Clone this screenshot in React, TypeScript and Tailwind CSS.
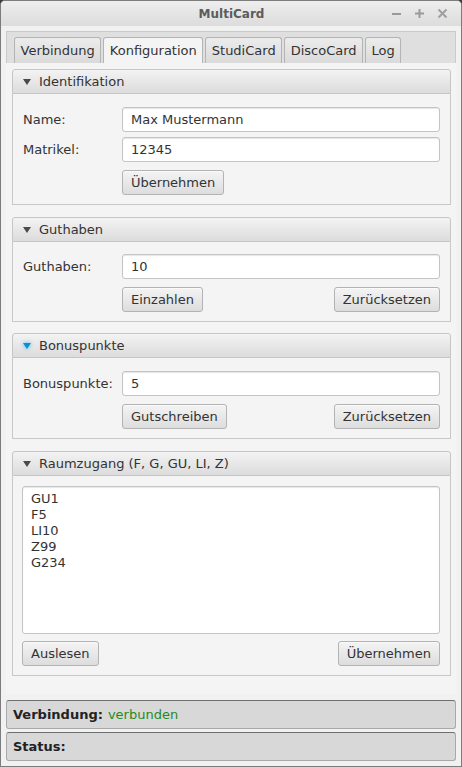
import React from "react";

function Arrow({ blue }: { blue?: boolean }) {
  return (
    <svg width="10" height="8" viewBox="0 0 10 8" className={blue ? "drop-shadow-[0_0_2px_#3fb4ef]" : ""}>
      <path d="M1 1 L9 1 L5 7 Z" fill={blue ? "#0b8fd3" : "#4a4a4a"} />
    </svg>
  );
}

function Btn({ children }: { children: React.ReactNode }) {
  return (
    <div className="h-[25px] px-[8px] flex items-center border border-[#b3b3b3] rounded-[3px] bg-gradient-to-b from-[#f4f4f4] to-[#dddddd] text-[13px] text-[#333] shadow-[inset_0_1px_0_#fafafa]">
      {children}
    </div>
  );
}

function Field({ value }: { value: string }) {
  return (
    <div className="flex-1 h-[25px] px-[8px] flex items-center border border-[#c4c4c4] rounded-[3px] bg-white text-[13px] text-[#333] shadow-[inset_0_1px_1px_#e6e6e6]">
      {value}
    </div>
  );
}

function Pane({ title, blue, children }: { title: string; blue?: boolean; children: React.ReactNode }) {
  return (
    <div className="flex flex-col">
      <div className="h-[25px] flex items-center gap-[7px] pl-[9px] border border-[#c6c6c6] rounded-t-[3px] bg-gradient-to-b from-[#f3f3f3] to-[#dcdcdc] text-[13px] text-[#333]">
        <Arrow blue={blue} />
        <span>{title}</span>
      </div>
      <div className="border-x border-b border-[#c8c8c8] bg-[#f4f4f4] pl-[9px] pr-[10px]">{children}</div>
    </div>
  );
}

function Label({ children }: { children: React.ReactNode }) {
  return <div className="w-[100px] pl-[1px] text-[13px] text-[#333]">{children}</div>;
}

export default function App() {
  const tabs = ["Verbindung", "Konfiguration", "StudiCard", "DiscoCard", "Log"];
  return (
    <div className="w-[462px] h-[767px] bg-[#3a3a3a] [font-family:'DejaVu_Sans',sans-serif]">
      <div className="w-full h-full flex flex-col border border-[#7c7c7c] rounded-t-[5px] bg-[#f1f1f1] overflow-hidden">
        {/* title bar */}
        <div className="h-[25px] shrink-0 grid grid-cols-[1fr_auto_1fr] items-center bg-gradient-to-b from-[#eeeeee] to-[#dcdcdc]">
          <div />
          <div className="text-[12px] font-bold text-[#5c5c5c] pl-[1px]">MultiCard</div>
          <div className="flex justify-end items-center gap-[12px] pr-[13px]">
            <svg width="11" height="11" viewBox="0 0 11 11">
              <path d="M1 6 H10" stroke="#9a9a9a" strokeWidth="2" />
            </svg>
            <svg width="11" height="11" viewBox="0 0 11 11">
              <path d="M1 5.5 H10 M5.5 1 V10" stroke="#9a9a9a" strokeWidth="2" />
            </svg>
            <svg width="11" height="11" viewBox="0 0 11 11">
              <path d="M1.5 1.5 L9.5 9.5 M9.5 1.5 L1.5 9.5" stroke="#a0a0a0" strokeWidth="2" />
            </svg>
          </div>
        </div>

        {/* tab pane */}
        <div className="mt-[5px] mx-[5px] flex-1 flex flex-col min-h-0">
          <div className="h-[32px] shrink-0 flex items-end gap-[2px] pl-[7px] bg-[#dfdfdf] border-x border-t border-[#cacaca]">
            {tabs.map((t) => (
              <div
                key={t}
                className={
                  "h-[26px] px-[5.5px] flex items-center border-x border-t border-[#b4b4b4] rounded-t-[3px] text-[13px] text-[#333] " +
                  (t === "Konfiguration" ? "bg-[#f4f4f4]" : "bg-gradient-to-b from-[#ececec] to-[#dadada]")
                }
              >
                {t}
              </div>
            ))}
          </div>
          <div className="flex-1 bg-[#f4f4f4] pl-[6px] pr-[5px] pt-[6px] flex flex-col">
            <Pane title="Identifikation">
              <div className="pt-[13px] pb-[9px] flex flex-col">
                <div className="flex items-center">
                  <Label>Name:</Label>
                  <Field value="Max Mustermann" />
                </div>
                <div className="flex items-center mt-[5px]">
                  <Label>Matrikel:</Label>
                  <Field value="12345" />
                </div>
                <div className="flex mt-[8px] pl-[100px]">
                  <Btn>Übernehmen</Btn>
                </div>
              </div>
            </Pane>
            <div className="mt-[12px]">
              <Pane title="Guthaben">
                <div className="pt-[12px] pb-[9px] flex flex-col">
                  <div className="flex items-center">
                    <Label>Guthaben:</Label>
                    <Field value="10" />
                  </div>
                  <div className="flex justify-between mt-[8px] pl-[100px]">
                    <Btn>Einzahlen</Btn>
                    <Btn>Zurücksetzen</Btn>
                  </div>
                </div>
              </Pane>
            </div>
            <div className="mt-[11px]">
              <Pane title="Bonuspunkte" blue>
                <div className="pt-[13px] pb-[9px] flex flex-col">
                  <div className="flex items-center">
                    <Label>Bonuspunkte:</Label>
                    <Field value="5" />
                  </div>
                  <div className="flex justify-between mt-[8px] pl-[100px]">
                    <Btn>Gutschreiben</Btn>
                    <Btn>Zurücksetzen</Btn>
                  </div>
                </div>
              </Pane>
            </div>
            <div className="mt-[12px]">
              <Pane title="Raumzugang (F, G, GU, LI, Z)">
                <div className="pt-[10px] pb-[9px] flex flex-col">
                  <div className="h-[148px] border border-[#c4c4c4] rounded-[3px] bg-white px-[8px] pt-[4px] text-[13px] leading-[16px] text-[#333] shadow-[inset_0_1px_1px_#e6e6e6]">
                    <div>GU1</div>
                    <div>F5</div>
                    <div>LI10</div>
                    <div>Z99</div>
                    <div>G234</div>
                  </div>
                  <div className="flex justify-between mt-[7px]">
                    <Btn>Auslesen</Btn>
                    <Btn>Übernehmen</Btn>
                  </div>
                </div>
              </Pane>
            </div>
          </div>
        </div>

        {/* status */}
        <div className="mt-[6px] px-[5px] pb-[5px] flex flex-col gap-[3px] shrink-0">
          <div className="h-[29px] flex items-center pl-[6px] gap-[5px] bg-[#d8d8d8] border border-[#a9a9a9] border-t-[#6f6f6f] rounded-[3px] text-[13px]">
            <span className="font-bold text-[#222]">Verbindung:</span>
            <span className="text-[#1f8a1f]">verbunden</span>
          </div>
          <div className="h-[29px] flex items-center pl-[6px] bg-[#d8d8d8] border border-[#a9a9a9] border-t-[#6f6f6f] rounded-[3px] text-[13px]">
            <span className="font-bold text-[#222]">Status:</span>
          </div>
        </div>
      </div>
    </div>
  );
}
